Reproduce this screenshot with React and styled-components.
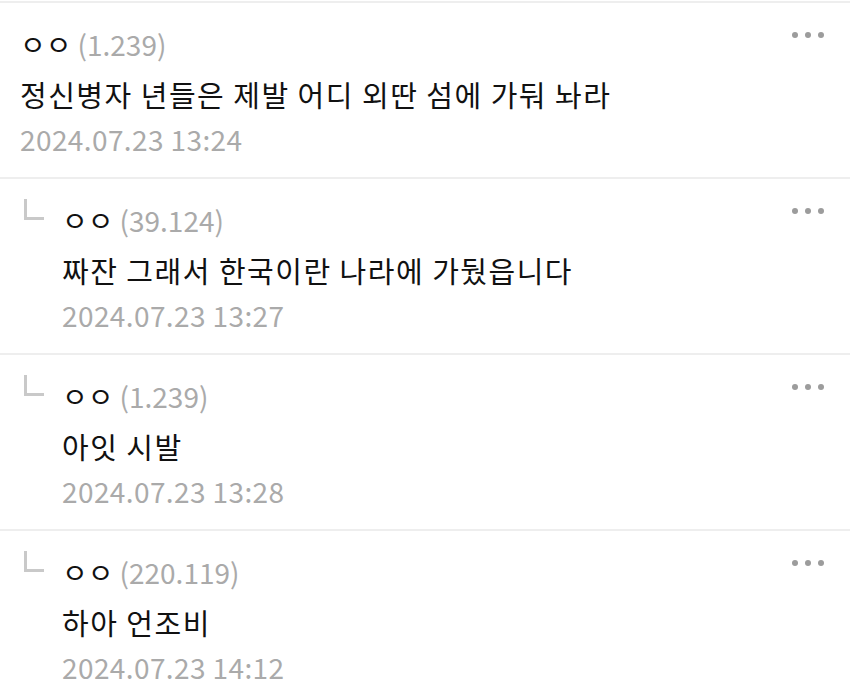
import React from "react";
import styled, { createGlobalStyle } from "styled-components";

const GlobalStyle = createGlobalStyle`
  html, body {
    margin: 0;
    padding: 0;
    background: #ffffff;
  }
  body {
    font-family: "Noto Sans CJK KR", "Noto Sans", sans-serif;
    color: #111111;
  }
`;

const comments = [
  { name: "ㅇㅇ", ip: "1.239", text: "정신병자 년들은 제발 어디 외딴 섬에 가둬 놔라", date: "2024.07.23 13:24" },
  { name: "ㅇㅇ", ip: "39.124", text: "짜잔 그래서 한국이란 나라에 가뒀읍니다", date: "2024.07.23 13:27", reply: true },
  { name: "ㅇㅇ", ip: "1.239", text: "아잇 시발", date: "2024.07.23 13:28", reply: true },
  { name: "ㅇㅇ", ip: "220.119", text: "하아 언조비", date: "2024.07.23 14:12", reply: true },
];

function ReplyMark() {
  return (
    <Mark width="22" height="22" viewBox="0 0 22 22">
      <path d="M3.5 0 V19.5 H22" fill="none" stroke="#c9c9c9" strokeWidth="3" />
    </Mark>
  );
}

function Comment({ c }) {
  return (
    <Item>
      <Indent $reply={c.reply}>{c.reply && <ReplyMark />}</Indent>
      <Content>
        <Header>
          <Name>{c.name}</Name>
          <Ip>({c.ip})</Ip>
        </Header>
        <Body>{c.text}</Body>
        <Date>{c.date}</Date>
      </Content>
      <More>
        <Dot />
        <Dot />
        <Dot />
      </More>
    </Item>
  );
}

export default function App() {
  return (
    <>
      <GlobalStyle />
      <List>
        {comments.map((c, i) => (
          <Comment key={i} c={c} />
        ))}
      </List>
    </>
  );
}

const List = styled.div`
  width: 850px;
  padding-top: 1px;
`;

const Item = styled.div`
  display: flex;
  align-items: flex-start;
  border-top: 2px solid #eeeeee;
  padding: 22px 0 20px;
`;

const Indent = styled.div`
  width: ${(p) => (p.$reply ? "62px" : "20px")};
  flex-shrink: 0;
  padding-left: ${(p) => (p.$reply ? "22px" : "0")};
  box-sizing: border-box;
`;

const Mark = styled.svg`
  display: block;
  margin-top: -2px;
`;

const Content = styled.div`
  flex: 1;
  display: flex;
  flex-direction: column;
`;

const Header = styled.div`
  display: flex;
  align-items: baseline;
  gap: 6px;
  height: 38px;
  line-height: 38px;
  font-size: 28px;
`;

const Name = styled.span`
  color: #111111;
`;

const Ip = styled.span`
  color: #aaaaaa;
`;

const Body = styled.div`
  margin-top: 6px;
  font-size: 29px;
  letter-spacing: 1.5px;
  line-height: 50px;
  color: #111111;
`;

const Date = styled.div`
  margin-top: 2px;
  font-size: 28px;
  letter-spacing: 0.4px;
  line-height: 36px;
  color: #aaaaaa;
`;

const More = styled.div`
  display: flex;
  gap: 7px;
  margin-top: 7px;
  margin-right: 26px;
`;

const Dot = styled.span`
  width: 6px;
  height: 6px;
  border-radius: 50%;
  background: #9c9c9c;
`;
